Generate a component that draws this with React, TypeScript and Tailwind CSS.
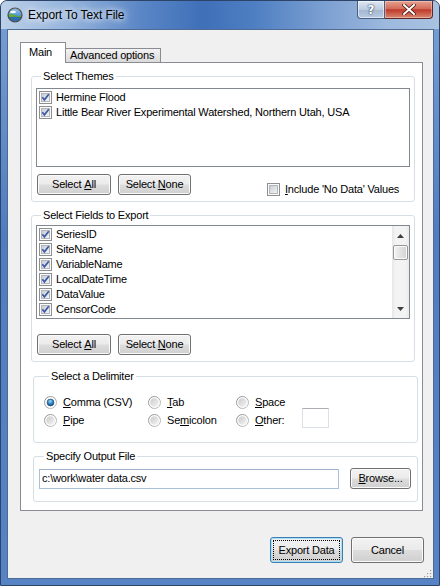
import React from 'react';

const btnBase =
  'flex items-center justify-center rounded-[3px] border border-[#707070] bg-[linear-gradient(#f2f2f2_0%,#ebebeb_48%,#dddddd_52%,#cfcfcf_100%)] shadow-[inset_0_0_0_1px_#fbfbfb] text-black';

function Check({ checked = true }: { checked?: boolean }) {
  return (
    <svg width="13" height="13" viewBox="0 0 13 13" className="shrink-0">
      <defs>
        <linearGradient id="cbIn" x1="0" y1="0" x2="1" y2="1">
          <stop offset="0" stopColor="#c6cad0" />
          <stop offset="1" stopColor="#f5f5f5" />
        </linearGradient>
      </defs>
      <rect x="0.5" y="0.5" width="12" height="12" fill="#fbfbfb" stroke="#8e8f8f" />
      <rect x="2.5" y="2.5" width="8" height="8" fill="url(#cbIn)" stroke="#b3b6bc" />
      {checked && (
        <path d="M3.3 6.3 L5.4 8.9 L9.8 3.3" fill="none" stroke="#3d5ba3" strokeWidth="1.7" />
      )}
    </svg>
  );
}

function Radio({ on = false }: { on?: boolean }) {
  return (
    <svg width="13" height="13" viewBox="0 0 13 13" className="shrink-0">
      <defs>
        <linearGradient id="rdOut" x1="0" y1="0" x2="1" y2="1">
          <stop offset="0" stopColor="#8a8a8a" />
          <stop offset="1" stopColor="#c4c4c4" />
        </linearGradient>
        <linearGradient id="rdIn" x1="0" y1="0" x2="1" y2="1">
          <stop offset="0" stopColor="#c9c9c9" />
          <stop offset="1" stopColor="#f6f6f6" />
        </linearGradient>
        <radialGradient id="rdDot" cx="0.45" cy="0.3" r="0.7">
          <stop offset="0" stopColor="#9adcfb" />
          <stop offset="0.6" stopColor="#2a7fc0" />
          <stop offset="1" stopColor="#174a7c" />
        </radialGradient>
      </defs>
      <circle cx="6.5" cy="6.5" r="6" fill="#fdfdfd" stroke="url(#rdOut)" />
      {on ? (
        <circle cx="6.5" cy="6.5" r="3.4" fill="url(#rdDot)" stroke="#1c4a78" strokeWidth="0.7" />
      ) : (
        <circle cx="6.5" cy="6.5" r="4.3" fill="url(#rdIn)" />
      )}
    </svg>
  );
}

function AppIcon() {
  return (
    <svg width="16" height="16" viewBox="0 0 16 16" className="shrink-0">
      <defs>
        <linearGradient id="sky" x1="0" y1="0" x2="0" y2="1">
          <stop offset="0" stopColor="#a9d2f2" />
          <stop offset="1" stopColor="#4f90cf" />
        </linearGradient>
        <clipPath id="ic">
          <circle cx="8" cy="8" r="6.6" />
        </clipPath>
      </defs>
      <g clipPath="url(#ic)">
        <rect x="0" y="0" width="16" height="9" fill="url(#sky)" />
        <ellipse cx="6" cy="5" rx="3" ry="1.2" fill="#ffffff" opacity="0.9" />
        <path d="M0 8.5 Q4 5.8 8 8 T16 7.4 V11.5 H0 Z" fill="#5fae3c" />
        <path d="M0 10.5 Q6 9.2 16 10.2 V16 H0 Z" fill="#2f6cab" />
      </g>
      <circle cx="8" cy="8" r="6.9" fill="none" stroke="#4b4f55" strokeWidth="1.4" />
      <path d="M3.5 4 A6 6 0 0 1 12 3.2" fill="none" stroke="#9a9ea4" strokeWidth="0.7" />
    </svg>
  );
}

function Acc({ children }: { children: React.ReactNode }) {
  return <span className="underline decoration-1 underline-offset-[1px]">{children}</span>;
}

function ListItem({ label }: { label: string }) {
  return (
    <div className="flex h-[15px] items-center gap-[4px] pl-[2px]">
      <Check />
      <span className="whitespace-nowrap">{label}</span>
    </div>
  );
}

function Arrow({ up }: { up: boolean }) {
  return (
    <svg width="7" height="4" viewBox="0 0 7 4">
      <path d={up ? 'M0 4 L3.5 0 L7 4 Z' : 'M0 0 L7 0 L3.5 4 Z'} fill="#3f3f3f" />
    </svg>
  );
}

export default function App() {
  const fields = ['SeriesID', 'SiteName', 'VariableName', 'LocalDateTime', 'DataValue', 'CensorCode'];

  return (
    <div className="flex h-[586px] w-[440px] flex-col overflow-hidden rounded-t-[7px] border border-[#2d4468] bg-[linear-gradient(180deg,#7aa0d4,#4f7dc0_40%,#5583c4)] font-['Liberation_Sans',Arial,sans-serif] text-[11px] tracking-[-0.2px] text-black">
      {/* title bar */}
      <div className="flex h-[28px] shrink-0 items-start bg-[linear-gradient(90deg,#bcd0e8_0%,#93b3dc_16%,#5a86c6_32%,#3f70b8_46%,#4f7fc2_58%,#7ca0d2_74%,#9db9de_88%,#a9c2e0_100%)]">
        <div className="ml-[6px] mt-[6px]">
          <AppIcon />
        </div>
        <div className="ml-[5px] mt-[7px] text-[12px] leading-[15px] tracking-[-0.1px] [text-shadow:0_0_6px_#ffffff,0_0_10px_#ffffff]">
          Export To Text File
        </div>
        <div className="ml-auto mr-[6px] flex">
          <div className="flex h-[18px] w-[28px] items-center justify-center rounded-bl-[4px] border border-t-0 border-[#4a5e82] bg-[linear-gradient(#dfe8f3,#bccbe0_50%,#a3b7d2_52%,#b9cbe2)] shadow-[inset_0_0_0_1px_rgba(255,255,255,0.55)]">
            <span className="font-['DejaVu_Sans',sans-serif] text-[12px] font-bold leading-none text-white [text-shadow:0_0_1px_#2a3a55,0_0_2px_#2a3a55]">
              ?
            </span>
          </div>
          <div className="flex h-[18px] w-[48px] items-center justify-center rounded-br-[4px] border border-l-0 border-t-0 border-[#5a2a2a] bg-[linear-gradient(#e6a291,#d36b5a_45%,#c0392b_52%,#d88970)] shadow-[inset_0_0_0_1px_rgba(255,220,210,0.45)]">
            <svg width="14" height="11" viewBox="0 0 14 11">
              <path d="M2 1 L12 10 M12 1 L2 10" stroke="#4b1a14" strokeWidth="3.6" strokeLinecap="square" />
              <path d="M2 1 L12 10 M12 1 L2 10" stroke="#ffffff" strokeWidth="2" strokeLinecap="square" />
            </svg>
          </div>
        </div>
      </div>

      {/* client area */}
      <div className="ml-[6px] mr-[5px] flex h-[550px] shrink-0 flex-col border border-[#4f6b93] bg-[#f0f0f0]">
        <div className="pl-[12px] pt-[12px]">
          {/* tabs */}
          <div className="relative z-10 flex h-[20px] items-end">
            <div className="-mb-px h-[21px] w-[46px] border border-b-0 border-[#898c95] bg-white pl-[8px] pt-[3px] leading-[13px]">
              Main
            </div>
            <div className="h-[14px] w-[95px] border border-b-0 border-l-0 border-[#898c95] bg-[linear-gradient(#f3f3f3,#e6e6e6_50%,#dadada)] pl-[4px] leading-[13px]">
              Advanced options
            </div>
          </div>

          {/* tab page */}
          <div className="h-[449px] w-[403px] border border-[#898c95] bg-white">
            {/* Select Themes */}
            <fieldset className="ml-[10px] mt-[7px] h-[132px] w-[384px] rounded-[3px] border border-[#d5dfe5] px-[4px]">
              <legend className="ml-[5px] px-[2px] leading-[13px]">Select Themes</legend>
              <div className="mt-[5px] h-[79px] w-[374px] border border-[#828790] bg-white pt-px">
                <ListItem label="Hermine Flood" />
                <ListItem label="Little Bear River Experimental Watershed, Northern Utah, USA" />
              </div>
              <div className="mt-[7px] flex items-start">
                <div className={`${btnBase} ml-px h-[21px] w-[74px]`}>
                  Select&nbsp;<Acc>A</Acc>ll
                </div>
                <div className={`${btnBase} ml-[7px] h-[21px] w-[73px]`}>
                  Select&nbsp;<Acc>N</Acc>one
                </div>
                <div className="ml-[76px] mt-[7px] flex items-center gap-[5px]">
                  <Check checked={false} />
                  <span className="whitespace-nowrap">
                    <Acc>I</Acc>nclude 'No Data' Values
                  </span>
                </div>
              </div>
            </fieldset>

            {/* Select Fields to Export */}
            <fieldset className="ml-[10px] mt-[7px] h-[153px] w-[384px] rounded-[3px] border border-[#d5dfe5] px-[4px]">
              <legend className="ml-[5px] px-[2px] leading-[13px]">Select Fields to Export</legend>
              <div className="mt-[3px] flex h-[94px] w-[374px] border border-[#828790] bg-white">
                <div className="flex-1 pt-px">
                  {fields.map((f) => (
                    <ListItem key={f} label={f} />
                  ))}
                </div>
                <div className="flex w-[17px] flex-col bg-[linear-gradient(90deg,#e6e6e6,#f3f3f3_20%,#f3f3f3_80%,#e9e9e9)]">
                  <div className="flex h-[17px] items-center justify-center pt-[2px]">
                    <Arrow up />
                  </div>
                  <div className="mx-[1px] mt-[2px] h-[15px] rounded-[2px] border border-[#979797] bg-[linear-gradient(90deg,#f4f4f4,#e2e2e2_50%,#d3d3d3)] shadow-[inset_0_0_0_1px_#fafafa]" />
                  <div className="flex-1" />
                  <div className="flex h-[17px] items-center justify-center pb-[1px]">
                    <Arrow up={false} />
                  </div>
                </div>
              </div>
              <div className="mt-[15px] flex items-start">
                <div className={`${btnBase} ml-px h-[21px] w-[74px]`}>
                  Select&nbsp;<Acc>A</Acc>ll
                </div>
                <div className={`${btnBase} ml-[7px] h-[21px] w-[73px]`}>
                  Select&nbsp;<Acc>N</Acc>one
                </div>
              </div>
            </fieldset>

            {/* Select a Delimiter */}
            <fieldset className="ml-[12px] mt-[8px] h-[73px] w-[385px] rounded-[3px] border border-[#d5dfe5] pl-[10px]">
              <legend className="ml-[5px] px-[2px] leading-[13px]">Select a Delimiter</legend>
              <div className="mt-[10px] flex h-[18px] items-center">
                <div className="flex w-[104px] items-center gap-[6px]">
                  <Radio on />
                  <span>
                    <Acc>C</Acc>omma (CSV)
                  </span>
                </div>
                <div className="flex w-[88px] items-center gap-[6px]">
                  <Radio />
                  <span>
                    <Acc>T</Acc>ab
                  </span>
                </div>
                <div className="flex items-center gap-[6px]">
                  <Radio />
                  <span>
                    <Acc>S</Acc>pace
                  </span>
                </div>
              </div>
              <div className="flex h-[18px] items-center">
                <div className="flex w-[104px] items-center gap-[6px]">
                  <Radio />
                  <span>
                    <Acc>P</Acc>ipe
                  </span>
                </div>
                <div className="flex w-[88px] items-center gap-[6px]">
                  <Radio />
                  <span>
                    Se<Acc>m</Acc>icolon
                  </span>
                </div>
                <div className="flex w-[66px] items-center gap-[6px]">
                  <Radio />
                  <span>
                    <Acc>O</Acc>ther:
                  </span>
                </div>
                <div className="-mt-[5px] h-[20px] w-[27px] border border-[#dbdfe6] border-t-[#abadb3] bg-white" />
              </div>
            </fieldset>

            {/* Specify Output File */}
            <fieldset className="ml-[12px] mt-[7px] h-[52px] w-[385px] rounded-[3px] border border-[#d5dfe5] pl-[5px]">
              <legend className="ml-[5px] px-[2px] leading-[13px]">Specify Output File</legend>
              <div className="mt-[5px] flex h-[21px] items-center">
                <div className="flex h-[20px] w-[300px] items-center border border-[#a9c2dc] border-t-[#9fb4cd] bg-white pl-[2px]">
                  {'c:\\work\\water data.csv'}
                </div>
                <div className={`${btnBase} ml-[11px] h-[21px] w-[61px]`}>
                  <Acc>B</Acc>rowse...
                </div>
              </div>
            </fieldset>
          </div>
        </div>

        {/* dialog buttons */}
        <div className="mt-[26px] flex justify-end gap-[8px] pr-[9px]">
          <div className="flex h-[26px] w-[73px] rounded-[3px] border border-[#3c7fb1] bg-[linear-gradient(#f2f2f2_0%,#ebebeb_48%,#dddddd_52%,#cfcfcf_100%)] p-[2px] shadow-[inset_0_0_0_1px_#a9dcf6]">
            <div className="flex flex-1 items-center justify-center border border-dotted border-black">
              Export Data
            </div>
          </div>
          <div className={`${btnBase} h-[26px] w-[73px]`}>Cancel</div>
        </div>

        {/* size grip */}
        <div className="mt-[7px] flex justify-end pr-[1px]">
          <svg width="8" height="8" viewBox="0 0 8 8">
            {[
              [6, 0],
              [3, 3],
              [6, 3],
              [0, 6],
              [3, 6],
              [6, 6],
            ].map(([x, y]) => (
              <g key={`${x}-${y}`}>
                <rect x={x + 0.7} y={y + 0.7} width="1.3" height="1.3" fill="#ffffff" />
                <rect x={x} y={y} width="1.3" height="1.3" fill="#a0a0a0" />
              </g>
            ))}
          </svg>
        </div>
      </div>
    </div>
  );
}
